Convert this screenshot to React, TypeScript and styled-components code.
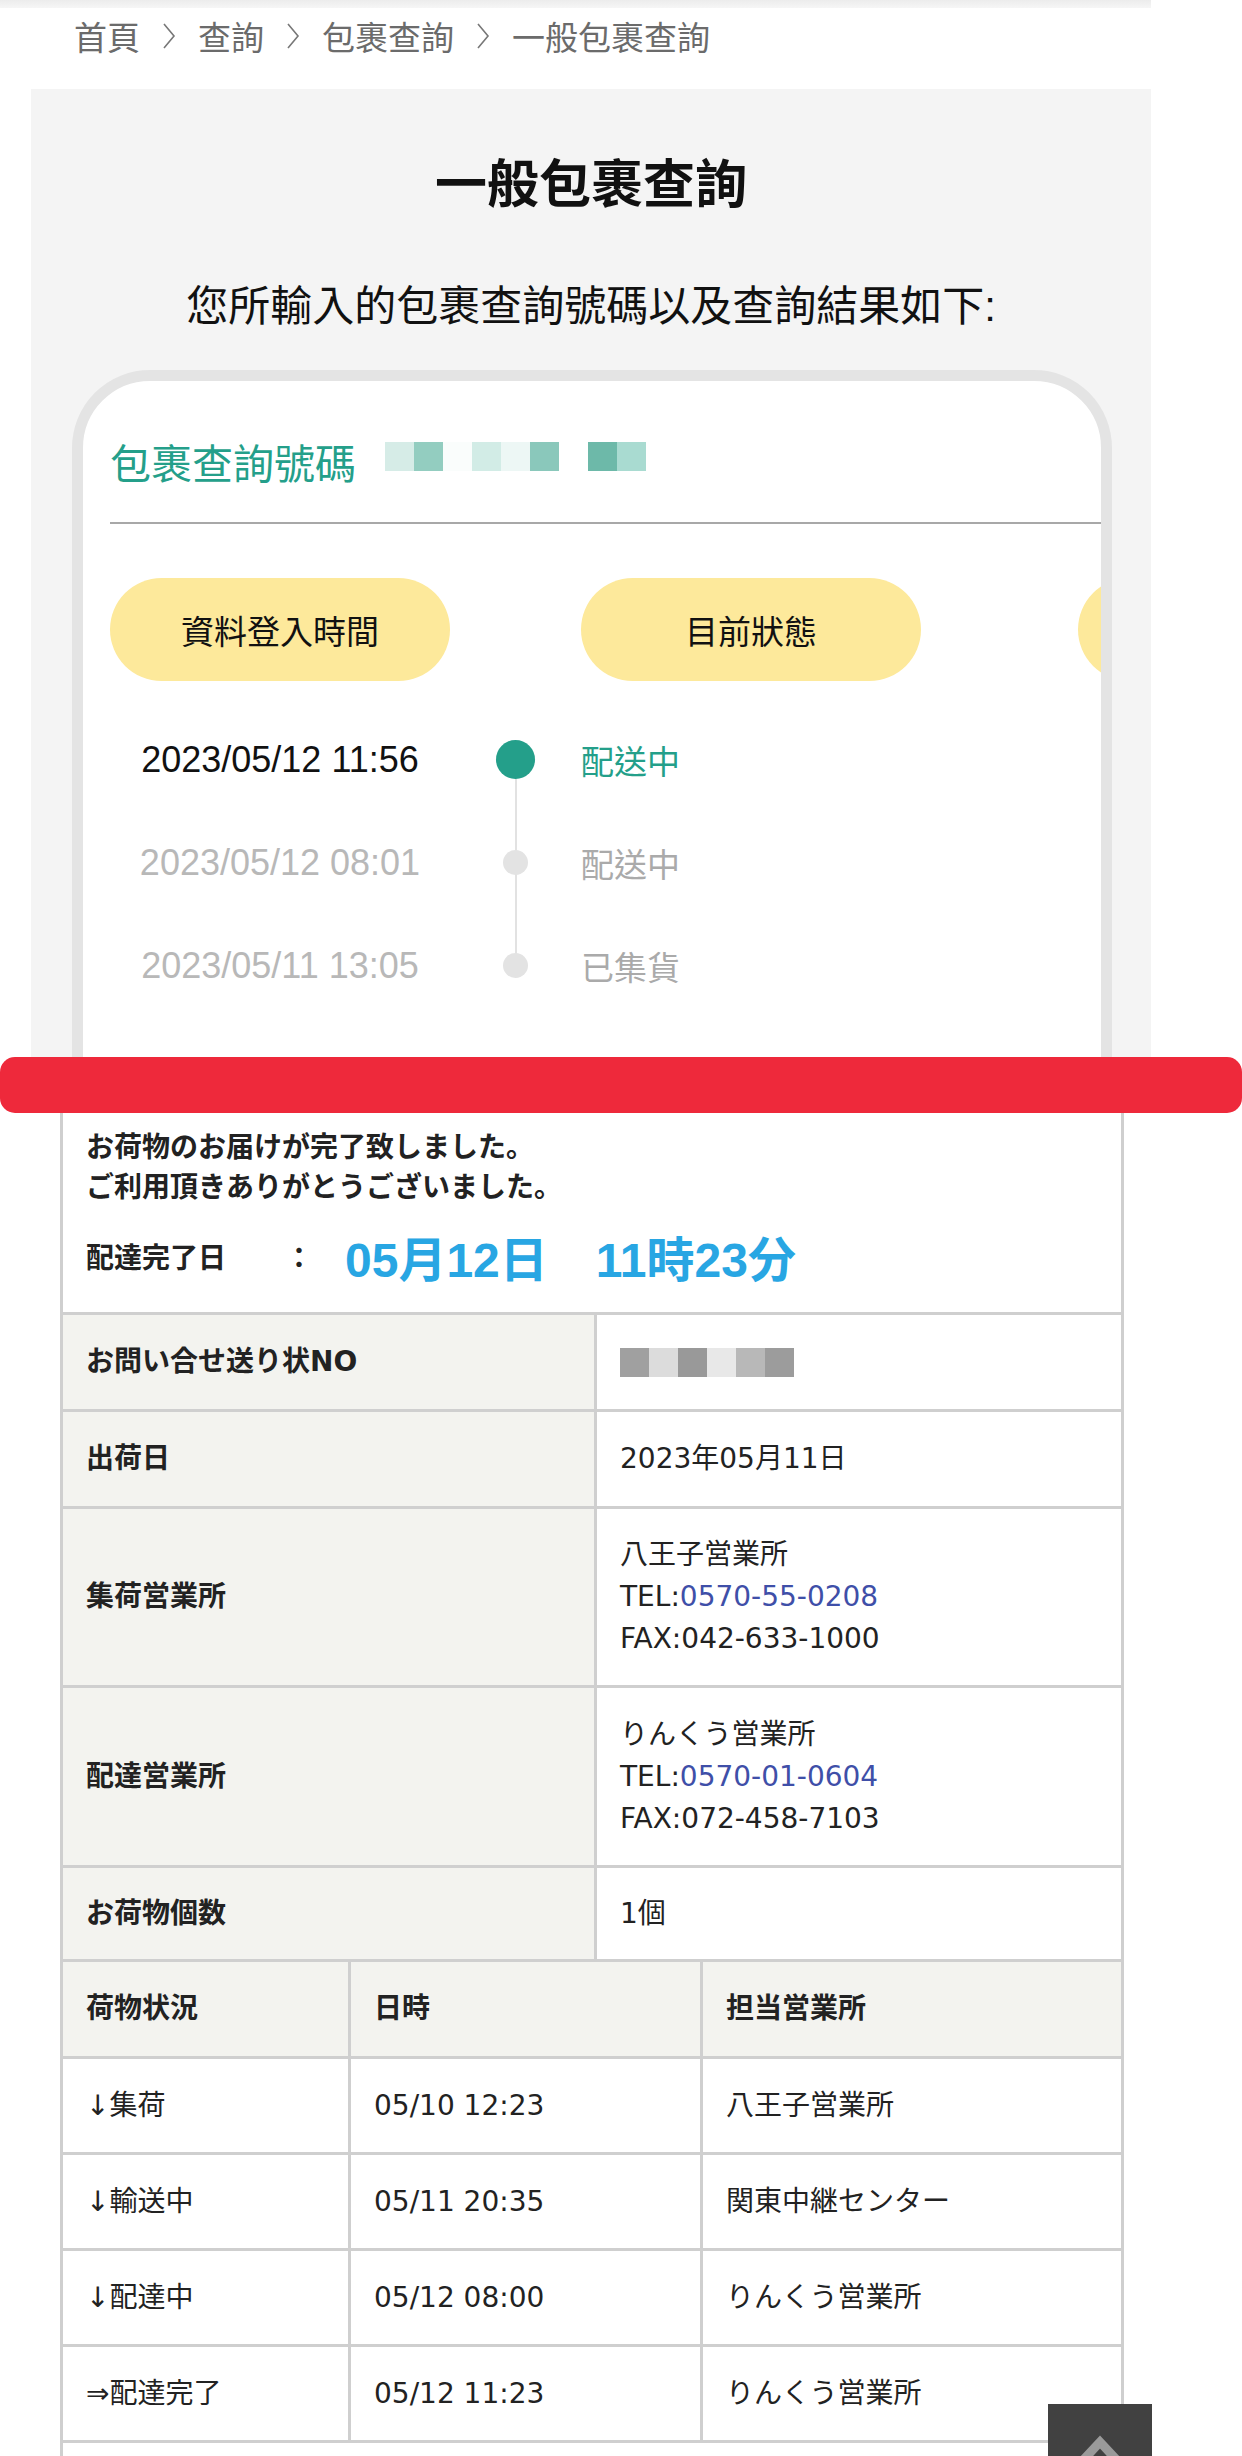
import styled, { createGlobalStyle } from 'styled-components';

const ZH = `"Liberation Sans", "Noto Sans CJK TC", sans-serif`;
const JA = `"DejaVu Sans", "Noto Sans CJK JP", sans-serif`;
const TEAL = '#249f8a';
const BORDER = '#cfcfcf';

const GlobalStyle = createGlobalStyle`
  html, body {
    margin: 0;
    padding: 0;
    background: #fff;
  }
  body {
    width: 1242px;
    overflow: hidden;
  }
`;

/* ---------- upper capture (Chinese tracking page) ---------- */

const TopSection = styled.section`
  width: 1151px;
  height: 1057px;
  overflow: hidden;
  font-family: ${ZH};
`;

const HeaderShadow = styled.div`
  height: 8px;
  background: linear-gradient(#ececec, #f6f6f6);
`;

const Breadcrumb = styled.nav`
  height: 56px;
  display: flex;
  align-items: center;
  gap: 22px;
  padding-left: 74px;
  font-size: 33px;
  color: #6b6b6b;
`;

const Crumb = styled.span`
  white-space: nowrap;
`;

const Panel = styled.div`
  margin: 25px 0 0 31px;
  background: #f4f4f4;
  padding-top: 66px;
  height: 1200px;
`;

const Title = styled.h1`
  margin: 0;
  font-size: 52px;
  line-height: 60px;
  font-weight: 700;
  text-align: center;
  color: #111;
`;

const Lead = styled.p`
  margin: 67px 0 0;
  font-size: 42px;
  line-height: 50px;
  text-align: center;
  color: #111;
`;

const Card = styled.div`
  margin: 38px 39px 0 41px;
  border: 11px solid #e4e4e4;
  border-radius: 78px;
  background: #fff;
  padding: 50px 0 200px 27px;
  overflow: hidden;
`;

const NumberRow = styled.div`
  display: flex;
  align-items: center;
  height: 60px;
`;

const NumberLabel = styled.span`
  font-size: 41px;
  color: ${TEAL};
  white-space: nowrap;
`;

const Mosaic = styled.div<{ $inline?: boolean }>`
  display: flex;
  margin: ${(p) => (p.$inline ? '0' : '0 0 10px 29px')};
`;

const MosaicCell = styled.span<{ $c: string; $size: number }>`
  width: ${(p) => p.$size}px;
  height: ${(p) => p.$size}px;
  background: ${(p) => p.$c};
`;

const Divider = styled.hr`
  margin: 31px 0 0;
  border: 0;
  height: 2px;
  background: #a8a8a8;
`;

const PillRow = styled.div`
  display: flex;
  gap: 131px;
  margin-top: 54px;
`;

const Pill = styled.div`
  flex-shrink: 0;
  width: 340px;
  height: 103px;
  border-radius: 52px;
  background: #fde99b;
  display: flex;
  align-items: center;
  justify-content: center;
  font-size: 33px;
  color: #111;
  &:nth-child(3) {
    margin-left: 26px;
  }
`;

const Timeline = styled.div`
  margin-top: 27px;
`;

const Step = styled.div`
  display: grid;
  grid-template-columns: 340px 131px 1fr;
  align-items: center;
  height: 103px;
`;

const StepTime = styled.span<{ $active: boolean }>`
  text-align: center;
  font-family: "Liberation Sans", sans-serif;
  font-size: 36px;
  color: ${(p) => (p.$active ? '#111' : '#b8b8b8')};
`;

const DotCell = styled.div<{ $linked: boolean }>`
  position: relative;
  height: 100%;
  display: flex;
  align-items: center;
  justify-content: center;
  &::before {
    content: '';
    display: ${(p) => (p.$linked ? 'block' : 'none')};
    position: absolute;
    left: calc(50% - 1px);
    top: -52px;
    bottom: 50%;
    width: 2px;
    background: #e2e2e2;
  }
`;

const Dot = styled.span<{ $active: boolean }>`
  position: relative;
  z-index: 1;
  width: ${(p) => (p.$active ? 39 : 25)}px;
  height: ${(p) => (p.$active ? 39 : 25)}px;
  border-radius: 50%;
  background: ${(p) => (p.$active ? TEAL : '#e3e3e3')};
`;

const StepStatus = styled.span<{ $active: boolean }>`
  font-size: 33px;
  color: ${(p) => (p.$active ? TEAL : '#aaaaaa')};
`;

/* ---------- seam between captures ---------- */

const Seam = styled.div`
  height: 56px;
  background: #ee293b;
  border-radius: 15px;
`;

/* ---------- lower capture (Japanese tracking table) ---------- */

const BottomSection = styled.section`
  padding-left: 60px;
  font-family: ${JA};
  color: #222;
`;

const Sheet = styled.div`
  width: 1064px;
  box-sizing: border-box;
  border-left: 3px solid ${BORDER};
  border-right: 3px solid ${BORDER};
`;

const Notice = styled.div`
  padding: 15px 0 28px 23px;
  border-bottom: 3px solid ${BORDER};
  font-size: 28px;
  font-weight: 700;
`;

const NoticeLine = styled.div`
  line-height: 40px;
`;

const DoneRow = styled.div`
  display: flex;
  align-items: center;
  height: 56px;
  margin-top: 20px;
`;

const DoneLabel = styled.span`
  width: 199px;
`;

const DoneColon = styled.span`
  width: 60px;
`;

const DoneValue = styled.span`
  font-family: "Liberation Sans", "Noto Sans CJK JP", sans-serif;
  font-size: 48px;
  font-weight: 700;
  color: #28a6e3;
  & + & {
    margin-left: 48px;
  }
`;

const Row = styled.div<{ $cols: string; $h: number }>`
  display: grid;
  grid-template-columns: ${(p) => p.$cols};
  min-height: ${(p) => p.$h}px;
  border-bottom: 3px solid ${BORDER};
`;

const Cell = styled.div<{ $head?: boolean }>`
  display: flex;
  flex-direction: column;
  justify-content: center;
  padding-left: 23px;
  font-size: 28px;
  line-height: 42px;
  font-weight: ${(p) => (p.$head ? 700 : 400)};
  background: ${(p) => (p.$head ? '#f3f3ef' : '#fff')};
  border-right: 3px solid ${BORDER};
  &:last-child {
    border-right: 0;
  }
`;

const Tel = styled.a`
  color: #3f4fa8;
  text-decoration: none;
`;

const ToTop = styled.button`
  position: fixed;
  right: 90px;
  bottom: -52px;
  width: 104px;
  height: 104px;
  padding: 0;
  border: 0;
  background: #414141;
  display: flex;
  justify-content: center;
  align-items: flex-start;
`;

const TWO = '534px 1fr';
const THREE = '288px 352px 1fr';

const tealMosaic = ['#d6ece7', '#93cdc0', '#fafdfc', '#d2ece6', '#edf7f5', '#8ac8bb', '#ffffff', '#6db9a9', '#a9dbd1'];
const grayMosaic = ['#a0a0a0', '#dcdcdc', '#999999', '#e8e8e8', '#b8b8b8', '#9c9c9c'];

const steps = [
  { time: '2023/05/12 11:56', status: '配送中' },
  { time: '2023/05/12 08:01', status: '配送中' },
  { time: '2023/05/11 13:05', status: '已集貨' },
];

const offices = [
  { label: '集荷営業所', name: '八王子営業所', tel: '0570-55-0208', fax: '042-633-1000', h: 176 },
  { label: '配達営業所', name: 'りんくう営業所', tel: '0570-01-0604', fax: '072-458-7103', h: 177 },
];

const history = [
  ['↓集荷', '05/10 12:23', '八王子営業所'],
  ['↓輸送中', '05/11 20:35', '関東中継センター'],
  ['↓配達中', '05/12 08:00', 'りんくう営業所'],
  ['⇒配達完了', '05/12 11:23', 'りんくう営業所'],
];

const crumbs = ['首頁', '查詢', '包裹查詢', '一般包裹查詢'];

const Chevron = () => (
  <svg width="14" height="28" viewBox="0 0 14 28">
    <polyline points="2,2 12,14 2,26" fill="none" stroke="#777" strokeWidth="1.6" />
  </svg>
);

export default function App() {
  return (
    <>
      <GlobalStyle />
      <TopSection>
        <HeaderShadow />
        <Breadcrumb>
          {crumbs.flatMap((c, i) => [
            i > 0 ? <Chevron key={`sep-${c}`} /> : null,
            <Crumb key={c}>{c}</Crumb>,
          ])}
        </Breadcrumb>
        <Panel>
          <Title>一般包裹查詢</Title>
          <Lead>您所輸入的包裹查詢號碼以及查詢結果如下:</Lead>
          <Card>
            <NumberRow>
              <NumberLabel>包裹查詢號碼</NumberLabel>
              <Mosaic>
                {tealMosaic.map((c, i) => (
                  <MosaicCell key={i} $c={c} $size={29} />
                ))}
              </Mosaic>
            </NumberRow>
            <Divider />
            <PillRow>
              <Pill>資料登入時間</Pill>
              <Pill>目前狀態</Pill>
              <Pill aria-hidden />
            </PillRow>
            <Timeline>
              {steps.map((s, i) => (
                <Step key={s.time}>
                  <StepTime $active={i === 0}>{s.time}</StepTime>
                  <DotCell $linked={i > 0}>
                    <Dot $active={i === 0} />
                  </DotCell>
                  <StepStatus $active={i === 0}>{s.status}</StepStatus>
                </Step>
              ))}
            </Timeline>
          </Card>
        </Panel>
      </TopSection>

      <Seam />

      <BottomSection>
        <Sheet>
          <Notice>
            <NoticeLine>お荷物のお届けが完了致しました。</NoticeLine>
            <NoticeLine>ご利用頂きありがとうございました。</NoticeLine>
            <DoneRow>
              <DoneLabel>配達完了日</DoneLabel>
              <DoneColon>：</DoneColon>
              <DoneValue>05月12日</DoneValue>
              <DoneValue>11時23分</DoneValue>
            </DoneRow>
          </Notice>

          <Row $cols={TWO} $h={94}>
            <Cell $head>お問い合せ送り状NO</Cell>
            <Cell>
              <Mosaic $inline>
                {grayMosaic.map((c, i) => (
                  <MosaicCell key={i} $c={c} $size={29} />
                ))}
              </Mosaic>
            </Cell>
          </Row>
          <Row $cols={TWO} $h={94}>
            <Cell $head>出荷日</Cell>
            <Cell>2023年05月11日</Cell>
          </Row>
          {offices.map((o) => (
            <Row key={o.label} $cols={TWO} $h={o.h}>
              <Cell $head>{o.label}</Cell>
              <Cell>
                <div>{o.name}</div>
                <div>
                  TEL:<Tel href={`tel:${o.tel}`}>{o.tel}</Tel>
                </div>
                <div>FAX:{o.fax}</div>
              </Cell>
            </Row>
          ))}
          <Row $cols={TWO} $h={91}>
            <Cell $head>お荷物個数</Cell>
            <Cell>1個</Cell>
          </Row>

          <Row $cols={THREE} $h={94}>
            <Cell $head>荷物状況</Cell>
            <Cell $head>日時</Cell>
            <Cell $head>担当営業所</Cell>
          </Row>
          {history.map(([state, when, office]) => (
            <Row key={state} $cols={THREE} $h={93}>
              <Cell>{state}</Cell>
              <Cell>{when}</Cell>
              <Cell>{office}</Cell>
            </Row>
          ))}
          <Row $cols="1fr" $h={93}>
            <Cell />
          </Row>
        </Sheet>
      </BottomSection>

      <ToTop aria-label="ページトップへ">
        <svg width="104" height="52" viewBox="0 0 104 52">
          <polyline points="26,66 52,38 78,66" fill="none" stroke="#9a9a9a" strokeWidth="9" />
        </svg>
      </ToTop>
    </>
  );
}
